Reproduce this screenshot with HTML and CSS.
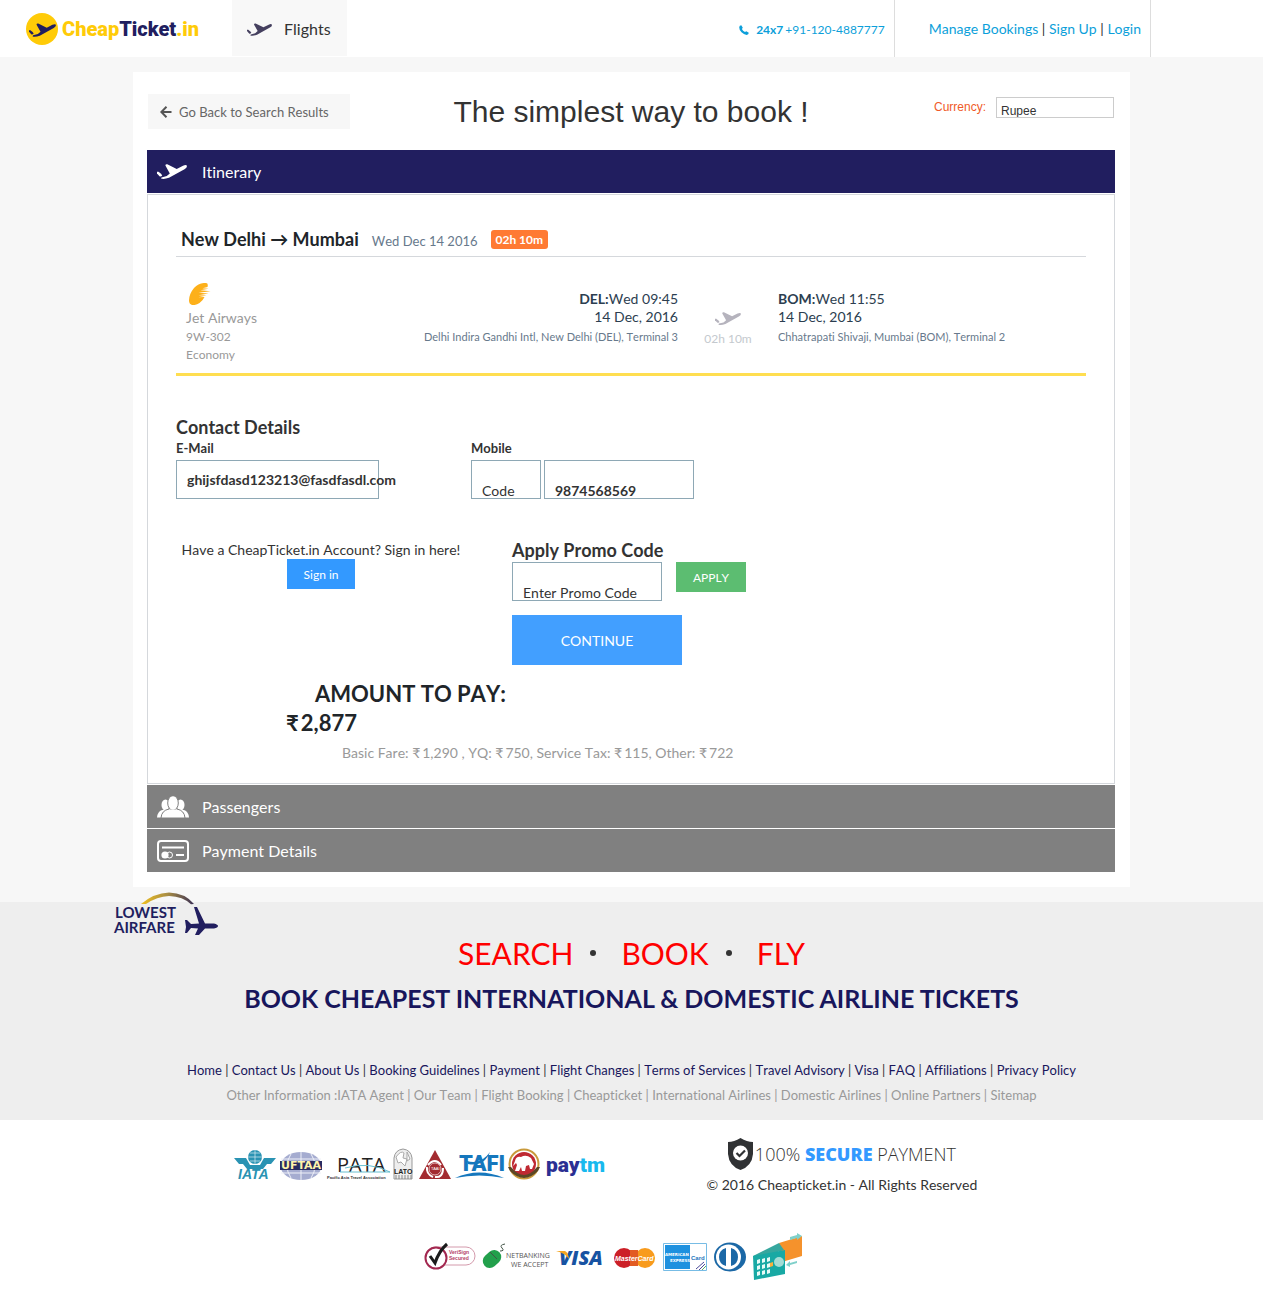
FILE: index.html
```html
<!DOCTYPE html>
<html lang="en">
<head>
<meta charset="utf-8">
<title>CheapTicket.in - Itinerary</title>
<meta name="viewport" content="width=device-width, initial-scale=1">
<link rel="stylesheet" href="styles.css">
</head>
<body>
<svg class="defs" aria-hidden="true">
  <symbol id="plane" viewBox="0 0 30 15">
    <path d="M4.5 13.4 9.8 12l3-2.6L8.4 1.6Q8.3 0 10.3.3l9.4 4.6L26 1.7Q29.4.2 30 2q0 2-2.5 3.2L12 13.8Q7 15.6 4 14.6z"/>
    <path d="M0 7.8h1.5L4 9.8l1.2 1.6q-1.4 1.7-2.7.8L0 9.4z"/>
  </symbol>
</svg>

<header class="topbar">
  <a class="brand" href="#" aria-label="CheapTicket.in home">
    <svg class="brand-mark" viewBox="0 0 32 32"><circle cx="16" cy="16" r="16" fill="#ffcb08"/><use href="#plane" x="3" y="10" width="27" height="14" fill="#211e5f"/></svg>
    <span class="brand-name">Cheap<span class="brand-dark">Ticket</span>.in</span>
  </a>
  <a class="tab" href="#"><svg class="tab-icon"><use href="#plane"/></svg>Flights</a>
  <div class="phone">
    <svg class="phone-icon" viewBox="0 0 10 10"><path d="M2.300.300 3.800 2.800 2.900 3.900Q3.700 5.900 6 7L7.300 6.200 9.800 7.700Q9.700 9.800 7.600 9.900 4.800 9.700 2.500 7.300.100 4.700.200 2.300.400.300 2.300.300z"/></svg>
    <b>24x7</b><a href="#">+91-120-4887777</a>
  </div>
  <nav class="account"><a href="#">Manage Bookings</a> | <a href="#">Sign Up</a> | <a href="#">Login</a></nav>
</header>

<div class="stage">
<main class="booking">
  <div class="booking-head">
    <a class="back" href="#">
      <svg class="back-icon" viewBox="0 0 12 12"><path d="M11.500 6H1.500M6.500.800 1.300 6l5.200 5.200"/></svg>Go Back to Search Results
    </a>
    <h1>The simplest way to book !</h1>
    <div class="currency">
      <label for="currency">Currency:</label>
      <select id="currency"><option>Rupee</option></select>
    </div>
  </div>

  <h2 class="step step-active"><svg class="step-plane"><use href="#plane"/></svg>Itinerary</h2>

  <section class="panel">
    <div class="route">
      <h3>New Delhi → Mumbai</h3>
      <span class="route-date">Wed Dec 14 2016</span>
      <span class="duration">02h 10m</span>
    </div>

    <div class="flight">
      <div class="airline">
        <svg class="airline-logo" viewBox="0 0 22 22"><path d="M17 0Q10-.5 5 5 0 11 0 17.500 0 21 3 22q4 .5 7.500-2 3.500-2.500 5-6l-6 .3 8-1.800-8-.2 10-1.800-10-.7 12-1.600-10-1 8-1.400-6-.6 5-1.200Q19.500 0 17 0z" fill="#fdb01a"/></svg>
        <p class="airline-name">Jet Airways</p>
        <p>9W-302</p>
        <p>Economy</p>
      </div>
      <div class="stop stop-from">
        <p><b>DEL:</b>Wed 09:45</p>
        <p>14 Dec, 2016</p>
        <p class="airport">Delhi Indira Gandhi Intl, New Delhi (DEL), Terminal 3</p>
      </div>
      <div class="leg"><svg class="leg-icon"><use href="#plane"/></svg><p>02h 10m</p></div>
      <div class="stop">
        <p><b>BOM:</b>Wed 11:55</p>
        <p>14 Dec, 2016</p>
        <p class="airport">Chhatrapati Shivaji, Mumbai (BOM), Terminal 2</p>
      </div>
    </div>

    <h3>Contact Details</h3>
    <div class="contact">
      <div>
        <label for="email">E-Mail</label>
        <div class="email-box"><input id="email" type="text" value="ghijsfdasd123213@fasdfasdl.com"></div>
      </div>
      <div>
        <label for="mobile">Mobile</label>
        <div class="mobile">
          <select class="field code" aria-label="Country code"><option>Code</option></select>
          <input class="field number" id="mobile" type="tel" value="9874568569">
        </div>
      </div>
    </div>

    <div class="actions">
      <div class="signin">
        <p>Have a CheapTicket.in Account? Sign in here!</p>
        <button class="btn btn-signin" type="button">Sign in</button>
      </div>
      <div class="promo">
        <h3><label for="promo">Apply Promo Code</label></h3>
        <div class="promo-row">
          <input class="field" id="promo" type="text" placeholder="Enter Promo Code">
          <button class="btn btn-apply" type="button">APPLY</button>
        </div>
        <button class="btn btn-continue" type="button">CONTINUE</button>
      </div>
    </div>

    <div class="amount">
      <p class="amount-label">AMOUNT TO PAY:</p>
      <p class="amount-total"><span class="rs">₹</span>2,877</p>
      <p class="amount-parts">Basic Fare: <span class="rs">₹</span>1,290 , YQ: <span class="rs">₹</span>750, Service Tax: <span class="rs">₹</span>115, Other: <span class="rs">₹</span>722</p>
    </div>
  </section>

  <h2 class="step">
    <svg class="step-icon" viewBox="0 0 32 22"><g fill="#fff"><ellipse cx="8.500" cy="9" rx="4" ry="5.500"/><ellipse cx="23.500" cy="9" rx="4" ry="5.500"/><path d="M0 21.500q.500-6 5-7.500h22q4.500 1.500 5 7.500z"/></g><g fill="#fff" stroke="#808080"><path d="M4 22q.500-7.500 8-9h8q7.500 1.500 8 9z"/><ellipse cx="16" cy="7" rx="5.300" ry="7.300"/></g><path d="M12 13.500h8v3h-8z" fill="#fff"/></svg>Passengers
  </h2>
  <h2 class="step">
    <svg class="step-icon" viewBox="0 0 32 22"><rect x="1" y="1" width="30" height="20" rx="3" fill="none" stroke="#fff" stroke-width="2"/><path d="M5 7.500h22M19 15h8" stroke="#fff" stroke-width="2"/><circle cx="12.500" cy="15" r="3" fill="none" stroke="#fff"/><circle cx="8" cy="15" r="3.600" fill="#fff"/></svg>Payment Details
  </h2>
</main>
</div>

<footer>
  <div class="promise">
    <div class="promise-inner">
      <svg class="airfare" viewBox="0 0 104 44" role="img" aria-label="Lowest airfare">
        <defs><linearGradient id="arc"><stop offset="0" stop-color="#f0c020"/><stop offset=".500" stop-color="#a88d45"/><stop offset="1" stop-color="#3a3054"/></linearGradient></defs>
        <path d="M27 12Q40 1 55 .500 71 1 80 12l-3 .300Q69 4.500 55 4 43 4.500 32 12z" fill="url(#arc)"/>
        <text x="1" y="26">LOWEST</text><text x="0" y="41">AIRFARE</text>
        <path d="M80 15h3l8 16.500h9q4 1 4 2.500t-4 2.500h-9L85 43h-4l3-6.500-7-.500-4 5h-2l1-6-1-7h2l4 4 8-.500z" fill="#211e5f"/>
      </svg>
      <p class="slogan"><span>SEARCH</span><i></i><span>BOOK</span><i></i><span>FLY</span></p>
      <h2>BOOK CHEAPEST INTERNATIONAL &amp; DOMESTIC AIRLINE TICKETS</h2>
      <nav class="links"><a href="#">Home</a> | <a href="#">Contact Us</a> | <a href="#">About Us</a> | <a href="#">Booking Guidelines</a> | <a href="#">Payment</a> | <a href="#">Flight Changes</a> | <a href="#">Terms of Services</a> | <a href="#">Travel Advisory</a> | <a href="#">Visa</a> | <a href="#">FAQ</a> | <a href="#">Affiliations</a> | <a href="#">Privacy Policy</a></nav>
      <nav class="links links-more">Other Information :<a href="#">IATA Agent</a> | <a href="#">Our Team</a> | <a href="#">Flight Booking</a> | <a href="#">Cheapticket</a> | <a href="#">International Airlines</a> | <a href="#">Domestic Airlines</a> | <a href="#">Online Partners</a> | <a href="#">Sitemap</a></nav>
    </div>
  </div>

  <div class="trust">
    <svg class="partners" viewBox="0 0 374 40" role="img" aria-label="Memberships">
      <g fill="#2a93b3"><circle cx="22" cy="9" r="7"/><path d="M1 10h12l4 7h10l4-7h12l-5 6h-4l-4 5H14l-4-5H6z"/></g>
      <path d="M15 9h14M22 2v14M17 5h10M17 13h10" stroke="#d7edf3" stroke-width=".700"/>
      <text class="iata" x="5" y="31">IATA</text>
      <ellipse cx="68" cy="18" rx="20.500" ry="14" fill="#a5acd0"/>
      <path d="M68 4v28M48 11h40M48 25h40M58 6q-8 12 0 24M78 6q8 12 0 24" fill="none" stroke="#eef0f8"/>
      <path d="M47 13h42v9H47z" fill="#292b61"/><text class="uftaa" x="48" y="21">UFTAA</text>
      <text class="pata" x="104" y="24">PATA</text><path d="M112 20q24-7 45 4h-50" fill="none" stroke="#69bfd0"/>
      <text class="pata-sub" x="94" y="31">Pacific Asia Travel Association</text>
      <path d="M161 31V10q1-8 9-9 8 1 9 9v21z" fill="#eee" stroke="#999"/><path d="M163 9q5-7 8-4l-1 5 4 1-2 7-4-4-3 1zM174 4l3 7-3 2z" fill="#fff" stroke="#aaa"/><text class="lato" x="161" y="26">LATO</text><path d="M162 28h17M162 30h17" stroke="#888" stroke-dasharray="2 1"/>
      <path d="M202 2 218 31H186z" fill="#a32b30"/><path d="M195 17q7-8 13 0M210 20q0 10-8 9M200 29q-7-3-6-10" fill="none" stroke="#fff" stroke-width="2"/><circle cx="202" cy="21" r="6" fill="#a32b30" stroke="#e2b8b9"/><text class="tiny" x="198" y="22">TAAI</text>
      <text class="tafi" x="226" y="23">TAFI</text><path d="M222 30q24-11 49 0-25-5-49 0zM234 13q14 4 23-9-6 15-22 12z" fill="#1577bd"/>
      <circle cx="291" cy="16" r="14.500" fill="#fff" stroke="#c99a3b" stroke-width="2"/><circle cx="291" cy="16" r="12" fill="#bf2932"/><path d="M282 13q1-5 6-4 5-3 10 1l3 6-2 5h-2l-1-4-3 1-1 5h-3l-1-4-2 4h-4l2-6-1-2-3 3z" fill="#fff"/><path d="M275 19h3q13 16 26 0h3l-2 4q-14 14-28 0z" fill="#5b4725"/>
      <text class="paytm" x="313" y="24">pay<tspan fill="#18b9ee">tm</tspan></text>
    </svg>
    <div class="legal">
      <div class="secure">
        <svg class="shield" viewBox="0 0 25 32"><path d="M12.500 0Q19 4 25 4v12q-1 12-12.500 16Q1 28 0 16V4q6 0 12.500-4z" fill="#303234"/><circle cx="12.500" cy="15" r="7.500" fill="#fff"/><path d="m8.500 15 3 3 5.500-5.500" fill="none" stroke="#303234" stroke-width="2.200"/></svg>
        <p>100% <b>SECURE</b> PAYMENT</p>
      </div>
      <p class="copyright">© 2016 Cheapticket.in - All Rights Reserved</p>
    </div>
  </div>

  <div class="cards">
    <svg viewBox="0 0 380 48" role="img" aria-label="Accepted payments">
      <rect x="2" y="14" width="49" height="18" rx="9" fill="#fff" stroke="#d49aac"/><circle cx="12" cy="25" r="10.500" fill="#fff" stroke="#a32850" stroke-width="2"/><path d="m6 23 5 7Q15 18 23 11" fill="none" stroke="#1b1b1b" stroke-width="3"/><text class="verisign" x="25" y="21">VeriSign</text><text class="verisign" x="25" y="27">Secured</text>
      <rect x="-10" y="-7" width="20" height="14" rx="7" transform="translate(68 26) rotate(-42)" fill="#22a04c"/><path d="m66 19 7 7M76 18q5 0 2-3t3-4" fill="none" stroke="#435447"/>
      <text class="bank" x="82" y="25">NETBANKING</text><text class="bank" x="87" y="34">WE ACCEPT</text>
      <text class="visa" x="135" y="32">VISA</text><path d="M132 18h9q3 1 4 8-4-6-13-8z" fill="#f5a623"/>
      <circle cx="200" cy="25" r="10" fill="#cc1f27"/><circle cx="221" cy="25" r="10" fill="#f89b1c"/><path d="M206 17h8v16h-8z" fill="#e25b22"/><text class="master" x="191" y="28">MasterCard</text>
      <path d="M239.500 10.500h43v27h-43z" fill="#fff" stroke="#77bce5"/><path d="M241 12h25v24h-25z" fill="#1e91df"/><text class="amex" x="241" y="23">AMERICAN</text><text class="amex" x="246" y="29">EXPRESS</text><text class="amex-card" x="267" y="27">Card</text><path d="m272 36 8-7M275 37l6-6" stroke="#4b4a98"/><path d="m278 37 4-4" stroke="#62aa63"/>
      <ellipse cx="306" cy="24" rx="16" ry="14.500" fill="#1b68a6"/><circle cx="304.500" cy="24" r="12.500" fill="#fff"/><path d="M302 15q-7 2-7 9t7 9zM307 15q7 2 7 9t-7 9z" fill="#1b68a6"/>
      <path d="m355 10 23-7v20l-20 6z" fill="#f5922c"/><path d="m329 23 26-13 5 7-29 9z" fill="#36a79e"/><path d="m329 23 32-6v24l-31 6z" fill="#18a9a4"/><g fill="#e7fbf7"><path d="m333 27 3-1v4l-3 1zM338 26l3-1v4l-3 1zM343 25l3-1v4l-3 1zM333 33l3-1v4l-3 1zM338 32l3-1v4l-3 1zM343 31l3-1v4l-3 1zM333 39l3-1v4l-3 1zM338 38l3-1v4l-3 1zM343 37l3-1v4l-3 1z"/></g><circle cx="355" cy="29" r="5" fill="#a3dcd5"/><path d="m346 30 3-1v4l-3 1z" fill="#fbb03b"/><path d="m366 4 7-2V0l5 3-5 4V5l-7 2zM373 28l-7 2v-2l-4 4 4 2v-2l7-2z" fill="#7fd0ca"/>
    </svg>
  </div>
</footer>
</body>
</html>
```
FILE: styles.css
```css
* { box-sizing: border-box; }
body { margin: 0; background: #fff; color: #333; font: 14px/18px Lato, "Open Sans", sans-serif; font-kerning: none; font-variant-ligatures: none; }
h1, h2, h3, p { margin: 0; }
a { text-decoration: none; color: inherit; }
input, select, button { font: inherit; color: inherit; border-radius: 0; font-kerning: none; }
select { appearance: none; }
.defs { position: absolute; width: 0; height: 0; }

/* Top bar */
.topbar { display: flex; align-items: stretch; height: 57px; padding: 0 112px 0 26px; background: #fff; }
.brand { display: flex; align-items: center; gap: 4px; width: 206px; }
.brand-mark { flex: none; width: 32px; height: 32px; }
.brand-name { color: #ffcb08; font: 900 20px/32px Roboto, sans-serif; }
.brand-dark { color: #211e5f; }
.tab { display: flex; align-items: center; gap: 12px; width: 115px; height: 56px; padding: 2px 0 0 15px; background: #f8f8f8; font-size: 16px; }
.tab-icon { width: 25px; height: 13px; fill: #45405f; }
.phone { display: flex; align-items: center; margin-left: auto; padding: 2px 9px 0 0; border-right: 1px solid #ddd; color: #0c9fda; font-size: 12px; }
.phone b { margin-right: 2px; }
.phone-icon { width: 10px; height: 10px; margin-right: 7px; fill: #0c9fda; }
.account { padding: 20px 9px 0 34px; border-right: 1px solid #ddd; }
.account a { color: #0c9fda; }

/* Booking card */
.stage { padding: 15px 0; background: #f7f7f7; }
.booking { max-width: 997px; margin: 0 auto; padding: 22px 15px 15px 14px; background: #fff; }
.booking-head { display: grid; grid-template-columns: 1fr auto 1fr; align-items: start; height: 56px; }
.back { display: flex; align-items: center; justify-self: start; gap: 7px; width: 202px; height: 35px; margin-left: 1px; padding-left: 12px; background: #f7f7f7; color: #666; font-size: 13px; }
.back-icon { width: 12px; height: 12px; fill: none; stroke: #555; stroke-width: 2; }
h1 { font: 30px/36px "Liberation Sans", Arial, sans-serif; }
.currency { display: flex; justify-self: end; gap: 10px; padding: 3px 1px 0 0; font: 12px/21px "Liberation Sans", Arial, sans-serif; }
.currency label { color: #f05a28; }
.currency select { width: 118px; height: 21px; padding: 7px 4px 0; border: 1px solid #ccc; background: #fff; line-height: 12px; }

.step { display: flex; align-items: center; height: 43px; margin-top: 1px; padding-left: 10px; background: #808080; color: #fff; font-size: 16px; font-weight: 400; }
.step-active { margin: 0 0 1px; background: #211e5f; }
.step-plane { width: 30px; height: 15px; margin-right: 15px; fill: #fff; }
.step-icon { width: 32px; height: 22px; margin-right: 13px; }

/* Itinerary panel */
.panel { padding: 34px 28px 21px; border: 1px solid #d5d8dc; }
h3 { font-size: 18px; line-height: 23px; font-weight: 700; }
.route { display: flex; align-items: center; height: 28px; padding: 0 5px 6px; border-bottom: 1px solid #d5d8dc; color: #202529; }
.route-date { margin: 2px 13px 0; color: #67798c; font-size: 13px; }
.duration { padding: 0 5px; border-radius: 3px; background: #ff7a33; color: #fff; font-size: 12px; line-height: 19px; font-weight: 700; }
.flight { display: grid; grid-template-columns: 150px 352px 100px 1fr; height: 119px; padding-top: 26px; border-bottom: 3px solid #ffde50; }
.airline { padding-left: 10px; color: #999; font-size: 12px; }
.airline-logo { display: block; width: 22px; height: 22px; margin: 0 0 3px 3px; }
.airline-name { font-size: 14px; line-height: 20px; }
.stop { padding-top: 7px; color: #2c3e50; }
.stop-from { text-align: right; }
.airport { padding-top: 2px; color: #67798c; font-size: 11px; }
.leg { padding-top: 29px; text-align: center; color: #c4c9ce; font-size: 12px; }
.leg-icon { display: block; width: 26px; height: 13px; margin: 0 auto 5px; fill: #b5b3bd; }
.flight + h3 { margin-top: 40px; }
.contact { display: grid; grid-template-columns: 295px 1fr; font-weight: 700; }
.contact label { display: block; margin-bottom: 3px; font-size: 13px; }
.email-box { width: 203px; height: 39px; border: 1px solid #8ea8b5; }
.email-box input { width: 240px; height: 37px; padding: 0 10px; border: 0; background: transparent; }
.mobile { display: flex; gap: 3px; }
.field { display: block; width: 150px; height: 39px; padding: 22px 10px 0; border: 1px solid #8ea8b5; background: #fff; line-height: 15px; }
.field::placeholder { color: #333; opacity: 1; }
.code { width: 70px; font-weight: 400; }
.actions { display: flex; gap: 46px; margin-top: 40px; }
.signin { width: 290px; padding-top: 2px; text-align: center; }
.btn { display: block; padding: 1px 0 0; border: 0; color: #fff; font-size: 12px; }
.btn-signin { width: 68px; height: 30px; margin: 0 auto; background: #3399ff; }
.promo-row { display: flex; gap: 14px; margin-bottom: 14px; }
.btn-apply { width: 70px; height: 30px; background: #5cbd71; }
.btn-continue { width: 170px; height: 50px; background: #429fff; font-size: 14px; }
.amount { padding: 14px 0 0 110px; color: #202529; }
.amount-label, .amount-total { font-size: 22px; line-height: 29px; font-weight: 700; }
.amount-label { padding-left: 29px; }
.amount-parts { padding: 7px 0 0 56px; color: #999; }
.rs { padding-right: 2px; }

/* Footer */
.promise { background: #eee; }
.promise-inner { position: relative; max-width: 1036px; height: 218px; margin: 0 auto; padding-top: 31px; text-align: center; }
.airfare { position: absolute; top: -10px; left: 0; width: 104px; height: 44px; overflow: visible; }
.airfare text { fill: #211e5f; font: bold 15px Lato, sans-serif; }
.slogan { display: flex; justify-content: center; align-items: center; color: #f00; font-size: 30px; line-height: 40px; font-kerning: normal; }
.slogan i { width: 6px; height: 6px; margin: 0 25px 0 17px; border-radius: 50%; background: #333; }
.promise h2 { margin: 7px 0 42px; color: #18165c; font-size: 25px; line-height: 36px; font-weight: 700; font-kerning: normal; }
.links { font-size: 13px; line-height: 25px; }
.links a { color: #18165c; }
.links-more, .links-more a { color: #999; }
.trust { display: flex; gap: 100px; max-width: 996px; margin: 0 auto; padding: 18px 0 0 99px; }
.partners { flex: none; width: 374px; height: 40px; margin-top: 10px; overflow: visible; }
.legal { display: flex; flex-direction: column; align-items: center; }
.secure { display: flex; align-items: center; gap: 2px; font: 18px/32px "Open Sans", sans-serif; }
.secure p { font-weight: 300; }
.secure b { color: #3399ff; font-weight: 800; }
.shield { width: 25px; height: 32px; }
.copyright { margin-top: 6px; white-space: nowrap; }
.cards { max-width: 996px; margin: 0 auto; padding: 39px 36px 24px 0; text-align: center; }
.cards svg { width: 380px; height: 48px; }

/* Lettering inside partner and payment logos */
.iata { fill: #2a93b3; font: italic bold 14px "Liberation Sans", sans-serif; }
.uftaa { fill: #fff3ac; font: bold 11px "DejaVu Sans", sans-serif; }
.pata { fill: #222; font: 20px "Open Sans", sans-serif; }
.pata-sub { fill: #333; font: bold 4px "Liberation Sans", sans-serif; }
.lato { fill: #222; font: bold 7px "Liberation Sans", sans-serif; }
.tiny { fill: #fff; font: 4px "Liberation Sans", sans-serif; }
.tafi { fill: #1577bd; font: 900 22px Roboto, sans-serif; }
.paytm { fill: #2b2f93; font: 900 21px Roboto, sans-serif; }
.verisign { fill: #b34167; font: bold 5px "Liberation Sans", sans-serif; }
.bank { fill: #555; font: 7px "Open Sans", sans-serif; }
.visa { fill: #1753a2; font: italic 800 20px "Open Sans", sans-serif; }
.master { fill: #fff; font: italic bold 7px "Liberation Sans", sans-serif; }
.amex { fill: #fff; font: bold 4px "DejaVu Sans", sans-serif; }
.amex-card { fill: #1e75bd; font: bold 6px "Liberation Sans", sans-serif; }
```
